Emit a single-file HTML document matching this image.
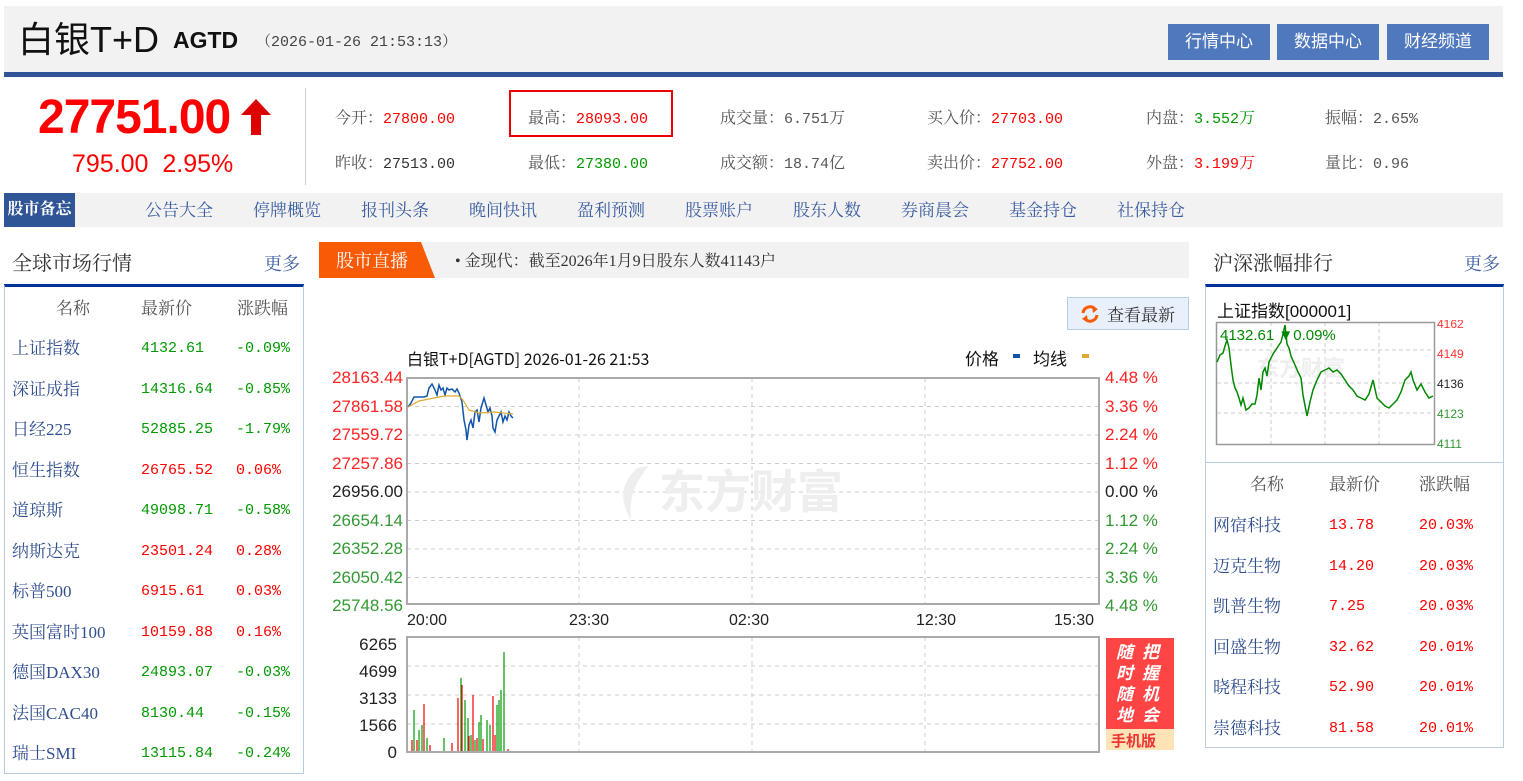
<!DOCTYPE html>
<html><head><meta charset="utf-8"><style>
*{margin:0;padding:0;box-sizing:border-box}
body{width:1523px;height:770px;background:#fff;position:relative;overflow:hidden;font-family:"Liberation Serif","Noto Serif CJK SC",serif;font-size:16px;color:#333}
.a{position:absolute;white-space:nowrap}
.m{font-family:"Liberation Mono","Noto Serif CJK SC",monospace;font-size:15px}
.r{color:#f00}.g{color:#090}.k{color:#333}
.btn{position:absolute;top:24px;height:36px;width:102px;background:#4f78bd;color:#fff;font-size:17px;text-align:center;line-height:36px;font-family:"Liberation Sans","Noto Sans CJK SC",sans-serif}
.nav{position:absolute;top:196px;color:#3b5da0;font-size:17px}
.row{position:absolute;left:0;width:100%;height:40px}
.cn{color:#2f4e8e;font-size:17px;top:-2px}
.row .m{top:4px}
.sans{font-family:"Liberation Sans","Noto Sans CJK SC",sans-serif}
</style></head><body>
<div class="a" style="left:4px;top:6px;width:1499px;height:66px;background:#f2f2f2"></div>
<div class="a" style="left:4px;top:72px;width:1499px;height:5px;background:#2f5597"></div>
<div class="a sans" style="left:18px;top:20px;font-size:36px;color:#111;line-height:40px">白银T+D</div>
<div class="a sans" style="left:173px;top:27px;font-size:23px;font-weight:bold;color:#111">AGTD</div>
<div class="a m" style="left:256px;top:30px;font-size:15px;color:#444">（2026-01-26 21:53:13）</div>
<div class="btn" style="left:1168px">行情中心</div>
<div class="btn" style="left:1277px">数据中心</div>
<div class="btn" style="left:1387px">财经频道</div>
<div class="a sans" style="left:38px;top:90px;font-size:48px;font-weight:bold;color:#f00;letter-spacing:-1px">27751.00</div>
<svg class="a" style="left:240px;top:98px" width="32" height="38"><path d="M16 1 L31 17 L21 17 L21 37 L11 37 L11 17 L1 17 Z" fill="#d00"/></svg>
<div class="a sans" style="left:72px;top:150px;font-size:25px;color:#f00">795.00&nbsp;&nbsp;2.95%</div>
<div class="a" style="left:305px;top:88px;width:1px;height:97px;background:#ccc"></div>
<div class="a" style="left:509px;top:90px;width:164px;height:47px;border:2px solid #e00"></div>
<div class="a m" style="left:335px;top:105px;color:#555"><span style="font-size:16px">今开：</span><span class="r">27800.00</span></div>
<div class="a m" style="left:335px;top:150px;color:#555"><span style="font-size:16px">昨收：</span><span class="k">27513.00</span></div>
<div class="a m" style="left:528px;top:105px;color:#555"><span style="font-size:16px">最高：</span><span class="r">28093.00</span></div>
<div class="a m" style="left:528px;top:150px;color:#555"><span style="font-size:16px">最低：</span><span class="g">27380.00</span></div>
<div class="a m" style="left:720px;top:105px;color:#555"><span style="font-size:16px">成交量：</span>6.751<span style="font-size:16px">万</span></div>
<div class="a m" style="left:720px;top:150px;color:#555"><span style="font-size:16px">成交额：</span>18.74<span style="font-size:16px">亿</span></div>
<div class="a m" style="left:927px;top:105px;color:#555"><span style="font-size:16px">买入价：</span><span class="r">27703.00</span></div>
<div class="a m" style="left:927px;top:150px;color:#555"><span style="font-size:16px">卖出价：</span><span class="r">27752.00</span></div>
<div class="a m" style="left:1146px;top:105px;color:#555"><span style="font-size:16px">内盘：</span><span class="g">3.552<span style="font-size:16px">万</span></span></div>
<div class="a m" style="left:1146px;top:150px;color:#555"><span style="font-size:16px">外盘：</span><span class="r">3.199<span style="font-size:16px">万</span></span></div>
<div class="a m" style="left:1325px;top:105px;color:#555"><span style="font-size:16px">振幅：</span>2.65%</div>
<div class="a m" style="left:1325px;top:150px;color:#555"><span style="font-size:16px">量比：</span>0.96</div>
<div class="a" style="left:4px;top:193px;width:1499px;height:34px;background:#f2f2f2"></div>
<div class="a" style="left:4px;top:193px;width:71px;height:34px;background:#2f5597;color:#fff;font-weight:bold;font-size:16px;line-height:34px;text-align:center">股市备忘</div>
<div class="nav" style="left:145px">公告大全</div><div class="nav" style="left:253px">停牌概览</div><div class="nav" style="left:361px">报刊头条</div><div class="nav" style="left:469px">晚间快讯</div><div class="nav" style="left:577px">盈利预测</div><div class="nav" style="left:685px">股票账户</div><div class="nav" style="left:793px">股东人数</div><div class="nav" style="left:901px">券商晨会</div><div class="nav" style="left:1009px">基金持仓</div><div class="nav" style="left:1117px">社保持仓</div>
<div class="a" style="left:12px;top:247px;font-size:20px;color:#333">全球市场行情</div>
<div class="a" style="left:264px;top:250px;font-size:18px;color:#3b5da0">更多</div>
<div class="a" style="left:4px;top:284px;width:300px;height:490px;border:1px solid #b8cce4;border-top:3px solid #003399"></div>
<div class="a" style="left:4px;top:287px;width:300px;height:480px">
<div class="a" style="left:52px;top:7px;color:#555;font-size:17px">名称</div><div class="a" style="left:137px;top:7px;color:#555;font-size:17px">最新价</div><div class="a" style="left:233px;top:7px;color:#555;font-size:17px">涨跌幅</div>
<div class="a" style="left:8px;top:49px;width:290px">
<div class="row" style="top:0"><span class="a cn" style="left:0">上证指数</span><span class="a m g" style="left:129px">4132.61</span><span class="a m g" style="left:224px">-0.09%</span></div>
<div class="row" style="top:40.5px"><span class="a cn" style="left:0">深证成指</span><span class="a m g" style="left:129px">14316.64</span><span class="a m g" style="left:224px">-0.85%</span></div>
<div class="row" style="top:81px"><span class="a cn" style="left:0">日经225</span><span class="a m g" style="left:129px">52885.25</span><span class="a m g" style="left:224px">-1.79%</span></div>
<div class="row" style="top:121.5px"><span class="a cn" style="left:0">恒生指数</span><span class="a m r" style="left:129px">26765.52</span><span class="a m r" style="left:224px">0.06%</span></div>
<div class="row" style="top:162px"><span class="a cn" style="left:0">道琼斯</span><span class="a m g" style="left:129px">49098.71</span><span class="a m g" style="left:224px">-0.58%</span></div>
<div class="row" style="top:202.5px"><span class="a cn" style="left:0">纳斯达克</span><span class="a m r" style="left:129px">23501.24</span><span class="a m r" style="left:224px">0.28%</span></div>
<div class="row" style="top:243px"><span class="a cn" style="left:0">标普500</span><span class="a m r" style="left:129px">6915.61</span><span class="a m r" style="left:224px">0.03%</span></div>
<div class="row" style="top:283.5px"><span class="a cn" style="left:0">英国富时100</span><span class="a m r" style="left:129px">10159.88</span><span class="a m r" style="left:224px">0.16%</span></div>
<div class="row" style="top:324px"><span class="a cn" style="left:0">德国DAX30</span><span class="a m g" style="left:129px">24893.07</span><span class="a m g" style="left:224px">-0.03%</span></div>
<div class="row" style="top:364.5px"><span class="a cn" style="left:0">法国CAC40</span><span class="a m g" style="left:129px">8130.44</span><span class="a m g" style="left:224px">-0.15%</span></div>
<div class="row" style="top:405px"><span class="a cn" style="left:0">瑞士SMI</span><span class="a m g" style="left:129px">13115.84</span><span class="a m g" style="left:224px">-0.24%</span></div>
</div></div>
<div class="a" style="left:319px;top:242px;width:870px;height:36px;background:#f2f2f2"></div>
<svg class="a" style="left:319px;top:242px" width="120" height="36"><path d="M0 0 H102 L116 36 H0 Z" fill="#f85a06"/></svg>
<div class="a" style="left:336px;top:247px;color:#fff;font-size:18px">股市直播</div>
<div class="a" style="left:455px;top:248px;color:#333;font-size:16px">• 金现代：截至2026年1月9日股东人数41143户</div>
<div class="a" style="left:1067px;top:297px;width:122px;height:33px;background:#e8f0fb;border:1px solid #b8cce4"></div>
<svg class="a" style="left:1080px;top:304px" width="20" height="20"><path d="M15 5 A7 7 0 0 0 3 9" stroke="#f85a06" stroke-width="3" fill="none"/><path d="M5 15 A7 7 0 0 0 17 11" stroke="#f85a06" stroke-width="3" fill="none"/><path d="M12 2 L18 5 L13 9 Z M8 18 L2 15 L7 11Z" fill="#f85a06"/></svg>
<div class="a" style="left:1107px;top:301px;font-size:17px;color:#333">查看最新</div>
<svg class="a" style="left:319px;top:340px" width="870" height="430" font-family="Liberation Sans Narrow, Liberation Sans, sans-serif">
<text x="88" y="25" font-size="16" fill="#111" font-family="Liberation Sans Narrow,Noto Sans CJK SC,sans-serif">白银T+D[AGTD] 2026-01-26 21:53</text>
<text x="646" y="25" font-size="17" fill="#111" font-family="Noto Sans CJK SC,sans-serif">价格</text><rect x="694" y="14" width="7" height="4" fill="#1155aa"/>
<text x="714" y="25" font-size="17" fill="#111" font-family="Noto Sans CJK SC,sans-serif">均线</text><rect x="763" y="14" width="7" height="4" fill="#e0aa30"/>
<g stroke="#ccc" stroke-dasharray="4,4" stroke-width="1">
<line x1="88" y1="66.5" x2="780" y2="66.5"/><line x1="88" y1="95" x2="780" y2="95"/><line x1="88" y1="123.5" x2="780" y2="123.5"/><line x1="88" y1="152" x2="780" y2="152"/><line x1="88" y1="180.5" x2="780" y2="180.5"/><line x1="88" y1="209" x2="780" y2="209"/><line x1="88" y1="237.5" x2="780" y2="237.5"/>
<line x1="260" y1="38" x2="260" y2="264"/><line x1="433" y1="38" x2="433" y2="264"/><line x1="606" y1="38" x2="606" y2="264"/>
<line x1="88" y1="326" x2="780" y2="326"/><line x1="88" y1="355" x2="780" y2="355"/><line x1="88" y1="384" x2="780" y2="384"/>
<line x1="260" y1="297" x2="260" y2="412"/><line x1="433" y1="297" x2="433" y2="412"/><line x1="606" y1="297" x2="606" y2="412"/>
</g>
<rect x="88" y="38" width="692" height="226" fill="none" stroke="#aaa" stroke-width="2"/>
<rect x="88" y="297" width="692" height="115" fill="none" stroke="#aaa" stroke-width="2"/>
<text x="340" y="168" font-size="46" font-weight="bold" fill="#eee" font-family="Noto Sans CJK SC,sans-serif">东方财富</text>
<path d="M318 128 Q294 150 312 180 Q308 150 330 126Z" fill="#eee"/>
<g font-size="17" text-anchor="end">
<text x="84" y="43" fill="#f22">28163.44</text><text x="84" y="72" fill="#f22">27861.58</text><text x="84" y="100" fill="#f22">27559.72</text><text x="84" y="129" fill="#f22">27257.86</text><text x="84" y="157" fill="#222">26956.00</text><text x="84" y="186" fill="#393">26654.14</text><text x="84" y="214" fill="#393">26352.28</text><text x="84" y="243" fill="#393">26050.42</text><text x="84" y="271" fill="#393">25748.56</text>
</g>
<g font-size="17">
<text x="786" y="43" fill="#f22">4.48 %</text><text x="786" y="72" fill="#f22">3.36 %</text><text x="786" y="100" fill="#f22">2.24 %</text><text x="786" y="129" fill="#f22">1.12 %</text><text x="786" y="157" fill="#222">0.00 %</text><text x="786" y="186" fill="#393">1.12 %</text><text x="786" y="214" fill="#393">2.24 %</text><text x="786" y="243" fill="#393">3.36 %</text><text x="786" y="271" fill="#393">4.48 %</text>
</g>
<g font-size="16" fill="#222"><text x="88" y="285">20:00</text><text x="250" y="285">23:30</text><text x="410" y="285">02:30</text><text x="597" y="285">12:30</text><text x="735" y="285">15:30</text></g>
<g font-size="17" fill="#222" text-anchor="end"><text x="78" y="310">6265</text><text x="78" y="337">4699</text><text x="78" y="364">3133</text><text x="78" y="391">1566</text><text x="78" y="418">0</text></g>
<path d="M89 67 L92 63 L95 57 L105 57 L108 56 L110 48 L113 44 L116 50 L118 55 L120 45 L122 50 L124 48 L126 55 L128 48 L130 50 L133 49 L136 52 L138 49 L140 53 L143 62 L145 80 L147 90 L148 100 L150 85 L152 80 L154 88 L156 72 L158 70 L160 82 L162 68 L165 58 L167 65 L169 72 L171 68 L173 76 L174 88 L176 92 L178 80 L180 76 L182 72 L184 82 L186 76 L188 80 L190 72 L192 76 L194 78" fill="none" stroke="#1155aa" stroke-width="1.5"/>
<path d="M89 67 L100 61 L115 58 L125 56 L140 56 L144 60 L150 70 L160 73 L175 72 L194 74" fill="none" stroke="#e0aa30" stroke-width="1.2"/>
<g stroke-width="1.2">
<path d="M95 411V370M100 411V390M103 411V385M108 411V398M125 411V398M142 411V338M146 411V360M149 411V378M152 411V395M156 411V400M160 411V382M162 411V375M168 411V380M171 411V385M178 411V365M180 411V360M182 411V350M185 411V312" stroke="#090"/>
<path d="M93 411V400M98 411V400M105 411V364M111 411V405M133 411V403M139 411V358M143 411V345M150 411V396M154 411V355M158 411V398M164 411V399M174 411V356M176 411V395M189 411V409" stroke="#e00"/>
</g>
<rect x="787" y="298" width="68" height="91" fill="#f44"/>
<rect x="787" y="389" width="68" height="21" fill="#fde3b5"/>
<g font-size="17" font-style="italic" font-weight="bold" fill="#fff" font-family="Noto Sans CJK SC,sans-serif"><text x="797" y="318">随</text><text x="797" y="339">时</text><text x="797" y="360">随</text><text x="797" y="381">地</text><text x="823" y="318">把</text><text x="823" y="339">握</text><text x="823" y="360">机</text><text x="823" y="381">会</text></g>
<text x="792" y="406" font-size="15" font-weight="bold" fill="#e33" font-family="Noto Sans CJK SC,sans-serif">手机版</text>
</svg>
<div class="a" style="left:1213px;top:247px;font-size:20px;color:#333">沪深涨幅排行</div>
<div class="a" style="left:1464px;top:250px;font-size:18px;color:#3b5da0">更多</div>
<div class="a" style="left:1205px;top:284px;width:299px;height:464px;border:1px solid #b8cce4;border-top:3px solid #003399"></div>
<div class="a" style="left:1206px;top:462px;width:297px;height:1px;background:#b8cce4"></div>
<div class="a sans" style="left:1217px;top:297px;font-size:17px;color:#111">上证指数[000001]</div>
<svg class="a" style="left:1215px;top:320px" width="290" height="130" font-family="Liberation Sans,sans-serif">
<g stroke="#ccc" stroke-dasharray="4,3"><line x1="2" y1="30" x2="218" y2="30"/><line x1="2" y1="63" x2="218" y2="63"/><line x1="2" y1="93" x2="218" y2="93"/><line x1="56" y1="2" x2="56" y2="124"/><line x1="110" y1="2" x2="110" y2="124"/><line x1="164" y1="2" x2="164" y2="124"/></g>
<text x="42" y="56" font-size="22" font-weight="bold" fill="#eee" font-family="Noto Sans CJK SC,sans-serif">东方财富</text>
<rect x="1.5" y="2.5" width="218" height="122" fill="none" stroke="#999" stroke-width="1.5"/>
<path d="M2 42 L5 35 L8 33 L10 26 L12 20 L14 28 L16 45 L18 60 L20 68 L22 72 L24 78 L26 85 L28 78 L31 90 L34 88 L37 84 L40 84 L42 75 L44 58 L46 70 L48 52 L50 48 L52 56 L54 42 L58 34 L62 28 L66 22 L68 14 L70 5 L72 24 L74 28 L76 36 L80 45 L83 52 L86 58 L88 75 L92 96 L95 82 L98 70 L102 60 L106 52 L110 50 L114 48 L118 52 L122 50 L126 54 L130 60 L134 66 L138 70 L142 76 L146 78 L150 80 L154 74 L158 60 L162 78 L166 82 L170 86 L174 88 L178 84 L182 80 L186 72 L190 60 L194 56 L196 52 L198 60 L202 70 L206 64 L210 72 L214 78 L218 76" fill="none" stroke="#080" stroke-width="1.5"/>
<text x="5" y="20" font-size="15" fill="#080">4132.61  ▼0.09%</text>
<g font-size="12"><text x="222" y="8" fill="#f33">4162</text><text x="222" y="38" fill="#f33">4149</text><text x="222" y="68" fill="#222">4136</text><text x="222" y="98" fill="#393">4123</text><text x="222" y="128" fill="#393">4111</text></g>
</svg>
<div class="a" style="left:1206px;top:472px;width:297px;height:280px">
<div class="a" style="left:44px;top:-2px;color:#555;font-size:17px">名称</div><div class="a" style="left:123px;top:-2px;color:#555;font-size:17px">最新价</div><div class="a" style="left:213px;top:-2px;color:#555;font-size:17px">涨跌幅</div>
<div class="row" style="top:41px"><span class="a cn" style="left:7px">网宿科技</span><span class="a m r" style="left:123px">13.78</span><span class="a m r" style="left:213px">20.03%</span></div>
<div class="row" style="top:81.5px"><span class="a cn" style="left:7px">迈克生物</span><span class="a m r" style="left:123px">14.20</span><span class="a m r" style="left:213px">20.03%</span></div>
<div class="row" style="top:122px"><span class="a cn" style="left:7px">凯普生物</span><span class="a m r" style="left:123px">7.25</span><span class="a m r" style="left:213px">20.03%</span></div>
<div class="row" style="top:162.5px"><span class="a cn" style="left:7px">回盛生物</span><span class="a m r" style="left:123px">32.62</span><span class="a m r" style="left:213px">20.01%</span></div>
<div class="row" style="top:203px"><span class="a cn" style="left:7px">晓程科技</span><span class="a m r" style="left:123px">52.90</span><span class="a m r" style="left:213px">20.01%</span></div>
<div class="row" style="top:243.5px"><span class="a cn" style="left:7px">崇德科技</span><span class="a m r" style="left:123px">81.58</span><span class="a m r" style="left:213px">20.01%</span></div>
</div>
</body></html>
